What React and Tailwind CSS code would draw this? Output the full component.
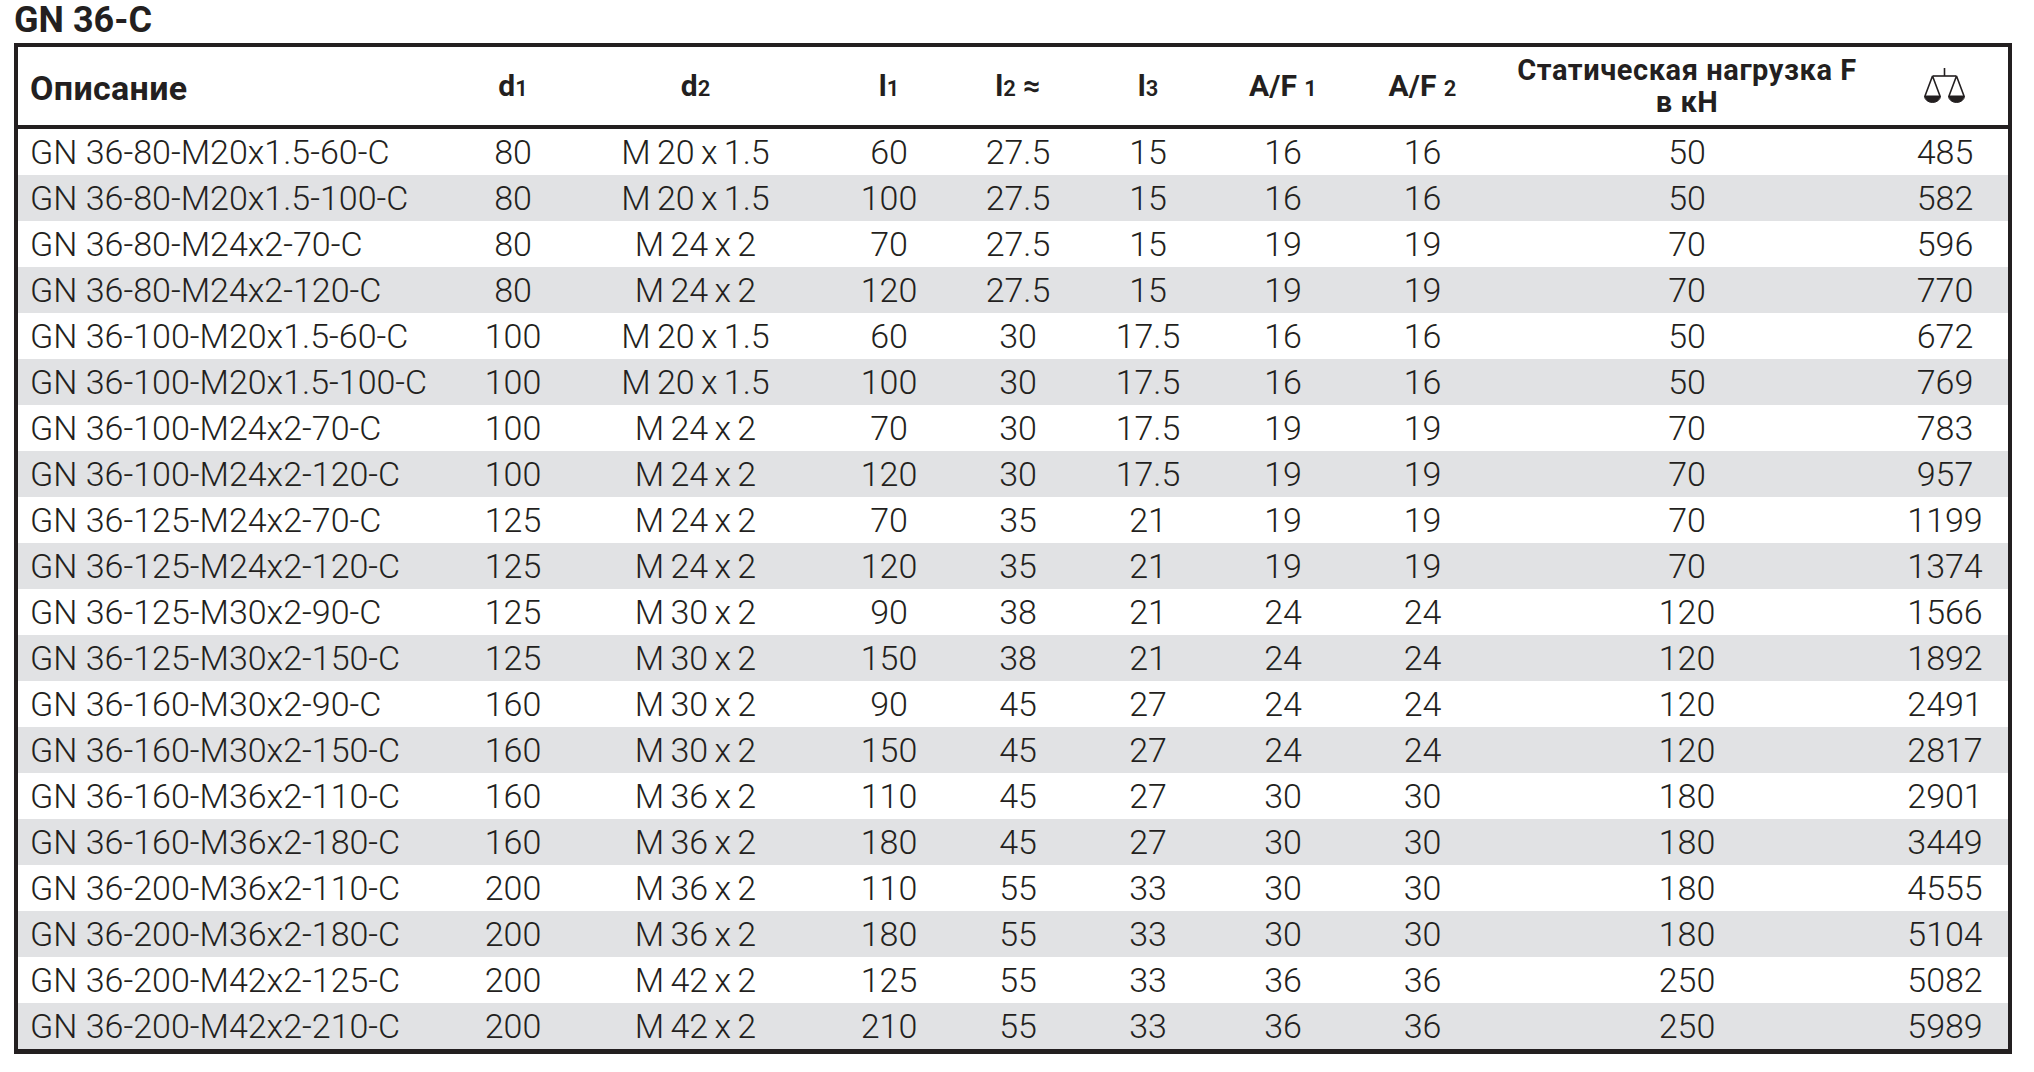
import React from "react";

const GRID = "grid grid-cols-[442px_106px_259px_128px_130px_130px_140px_139px_390px_126px]";

const ROWS = [
  ["GN 36-80-M20x1.5-60-C", "80", "M 20 x 1.5", "60", "27.5", "15", "16", "16", "50", "485"],
  ["GN 36-80-M20x1.5-100-C", "80", "M 20 x 1.5", "100", "27.5", "15", "16", "16", "50", "582"],
  ["GN 36-80-M24x2-70-C", "80", "M 24 x 2", "70", "27.5", "15", "19", "19", "70", "596"],
  ["GN 36-80-M24x2-120-C", "80", "M 24 x 2", "120", "27.5", "15", "19", "19", "70", "770"],
  ["GN 36-100-M20x1.5-60-C", "100", "M 20 x 1.5", "60", "30", "17.5", "16", "16", "50", "672"],
  ["GN 36-100-M20x1.5-100-C", "100", "M 20 x 1.5", "100", "30", "17.5", "16", "16", "50", "769"],
  ["GN 36-100-M24x2-70-C", "100", "M 24 x 2", "70", "30", "17.5", "19", "19", "70", "783"],
  ["GN 36-100-M24x2-120-C", "100", "M 24 x 2", "120", "30", "17.5", "19", "19", "70", "957"],
  ["GN 36-125-M24x2-70-C", "125", "M 24 x 2", "70", "35", "21", "19", "19", "70", "1199"],
  ["GN 36-125-M24x2-120-C", "125", "M 24 x 2", "120", "35", "21", "19", "19", "70", "1374"],
  ["GN 36-125-M30x2-90-C", "125", "M 30 x 2", "90", "38", "21", "24", "24", "120", "1566"],
  ["GN 36-125-M30x2-150-C", "125", "M 30 x 2", "150", "38", "21", "24", "24", "120", "1892"],
  ["GN 36-160-M30x2-90-C", "160", "M 30 x 2", "90", "45", "27", "24", "24", "120", "2491"],
  ["GN 36-160-M30x2-150-C", "160", "M 30 x 2", "150", "45", "27", "24", "24", "120", "2817"],
  ["GN 36-160-M36x2-110-C", "160", "M 36 x 2", "110", "45", "27", "30", "30", "180", "2901"],
  ["GN 36-160-M36x2-180-C", "160", "M 36 x 2", "180", "45", "27", "30", "30", "180", "3449"],
  ["GN 36-200-M36x2-110-C", "200", "M 36 x 2", "110", "55", "33", "30", "30", "180", "4555"],
  ["GN 36-200-M36x2-180-C", "200", "M 36 x 2", "180", "55", "33", "30", "30", "180", "5104"],
  ["GN 36-200-M42x2-125-C", "200", "M 42 x 2", "125", "55", "33", "36", "36", "250", "5082"],
  ["GN 36-200-M42x2-210-C", "200", "M 42 x 2", "210", "55", "33", "36", "36", "250", "5989"],
];

const Sub = ({ children }) => <span className="text-[22px] font-semibold">{children}</span>;

const ScaleIcon = () => (
  <svg width="42" height="36" viewBox="0 0 42 36" fill="none" stroke="#231f20" strokeWidth="1.6">
    <line x1="20.5" y1="0" x2="20.5" y2="8" />
    <line x1="8.5" y1="8" x2="32.5" y2="8" />
    <path d="M8.5 8 L1 28 M8.5 8 L16 28" />
    <path d="M32.5 8 L25 28 M32.5 8 L40 28" />
    <path d="M0.5 28 H16.5 A8 6.5 0 0 1 0.5 28 Z" fill="#231f20" strokeWidth="1" />
    <path d="M24.5 28 H40.5 A8 6.5 0 0 1 24.5 28 Z" fill="#231f20" strokeWidth="1" />
  </svg>
);

const HeaderRow = () => (
  <div className={`${GRID} h-[82px] items-center border-b-4 border-[#231f20] font-bold text-[30px] leading-none`}>
    <div className="pl-3 pt-1 text-[34px] tracking-[0.01em]">Описание</div>
    <div className="text-center">d<Sub>1</Sub></div>
    <div className="text-center">d<Sub>2</Sub></div>
    <div className="text-center">l<Sub>1</Sub></div>
    <div className="text-center">l<Sub>2</Sub> ≈</div>
    <div className="text-center">l<Sub>3</Sub></div>
    <div className="text-center">A/F <Sub>1</Sub></div>
    <div className="text-center">A/F <Sub>2</Sub></div>
    <div className="text-center text-[29px] leading-[32px] tracking-[0.02em]">
      Статическая нагрузка F
      <br />в кН
    </div>
    <div className="flex justify-center">
      <ScaleIcon />
    </div>
  </div>
);

const DataRow = ({ cells, shaded }) => (
  <div className={`${GRID} h-[46px] items-center ${shaded ? "bg-[#e1e2e4]" : "bg-white"}`}>
    {cells.map((c, i) => (
      <div
        key={i}
        className={i === 0 ? "pl-3 whitespace-nowrap" : "text-center whitespace-nowrap [word-spacing:-2px]"}
      >
        {c}
      </div>
    ))}
  </div>
);

export default function App() {
  return (
    <div className="min-h-screen bg-white pl-[14px] font-['Roboto','Noto_Sans',sans-serif] text-[#231f20]">
      <div className="h-[43px] pt-[2px] text-[36px] font-bold leading-none">GN 36-C</div>
      <div className="w-[1998px] border-x-4 border-t-4 border-b-[5px] border-[#231f20]">
        <HeaderRow />
        <div className="text-[34px] font-light leading-none">
          {ROWS.map((r, i) => (
            <DataRow key={i} cells={r} shaded={i % 2 === 1} />
          ))}
        </div>
      </div>
    </div>
  );
}
